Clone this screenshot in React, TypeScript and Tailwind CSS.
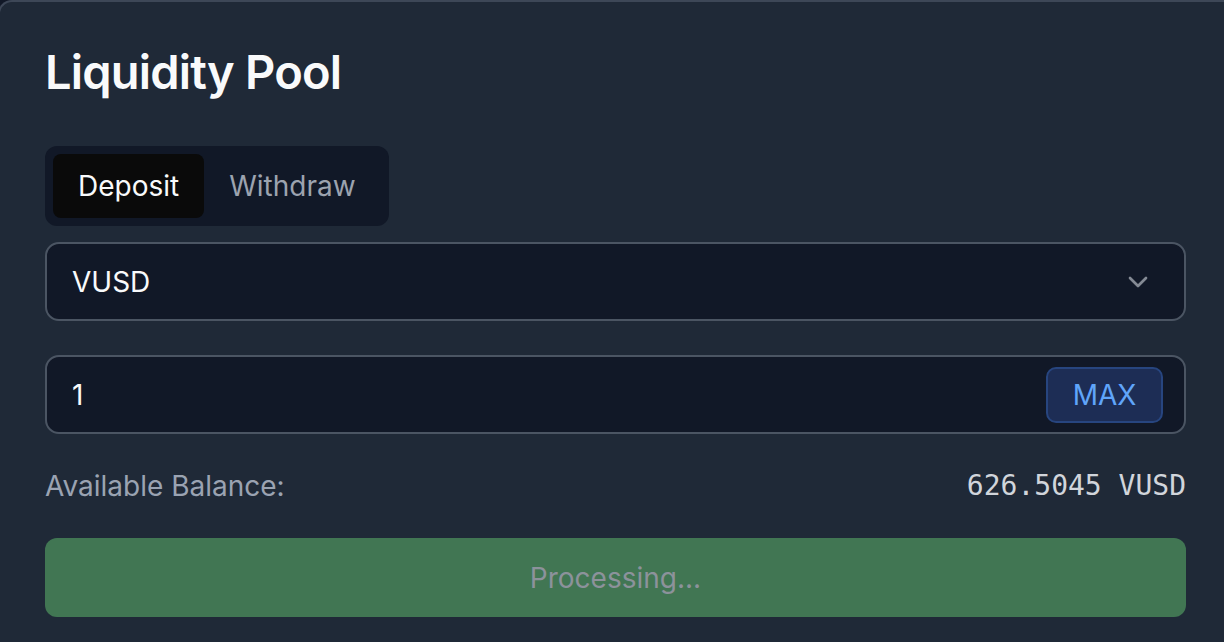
import { ChevronDown } from "lucide-react";

export default function App() {
  return (
    <div className="w-full h-[642px] overflow-hidden bg-[#111827] font-['Inter',sans-serif]">
      {/* CARD */}
      <div className="-ml-[2px] w-[1300px] h-[700px] bg-[#1f2937] border-t-2 border-l-2 border-[#3d4757] rounded-tl-[14px] pl-[45px] pt-[38px]">
        <div className="w-[1141px]">
          <h1 className="text-[47px] leading-[64px] font-semibold text-[#f9fafb] tracking-[-0.8px]">
            Liquidity Pool
          </h1>

          {/* TABS */}
          <div className="mt-[42px] inline-flex p-[8px] rounded-[12px] bg-[#111827]">
            <button className="h-[64px] px-[25px] rounded-[8px] bg-[#0a0a0a] text-[28px] text-[#f9fafb]">
              Deposit
            </button>
            <button className="h-[64px] px-[25px] rounded-[8px] text-[28px] text-[#9ca3af]">
              Withdraw
            </button>
          </div>

          {/* SELECT */}
          <div className="mt-[16px] h-[79px] flex items-center justify-between border-2 border-[#4b5563] rounded-[14px] bg-[#111827] pl-[25px] pr-[30px]">
            <span className="text-[28px] text-[#f9fafb]">VUSD</span>
            <ChevronDown size={32} strokeWidth={2} className="text-[#848a94]" />
          </div>

          {/* AMOUNT */}
          <div className="mt-[34px] h-[79px] flex items-center justify-between border-2 border-[#4b5563] rounded-[14px] bg-[#111827] pl-[25px] pr-[21px]">
            <span className="text-[28px] text-[#f9fafb]">1</span>
            <button className="h-[56px] w-[117px] rounded-[10px] border-2 border-[#27457f] bg-[#1d2d55] text-[28px] text-[#60a5fa]">
              MAX
            </button>
          </div>

          {/* BALANCE */}
          <div className="mt-[32px] h-[40px] flex items-center justify-between">
            <span className="text-[28px] text-[#9aa3b2]">Available Balance:</span>
            <span className="text-[28px] text-[#d1d5db] font-['DejaVu_Sans_Mono',monospace]">
              626.5045 VUSD
            </span>
          </div>

          {/* SUBMIT */}
          <button className="mt-[32px] w-full h-[79px] rounded-[12px] bg-[#417653] text-[28px] text-[#8c929b]">
            Processing...
          </button>
        </div>
      </div>
    </div>
  );
}
